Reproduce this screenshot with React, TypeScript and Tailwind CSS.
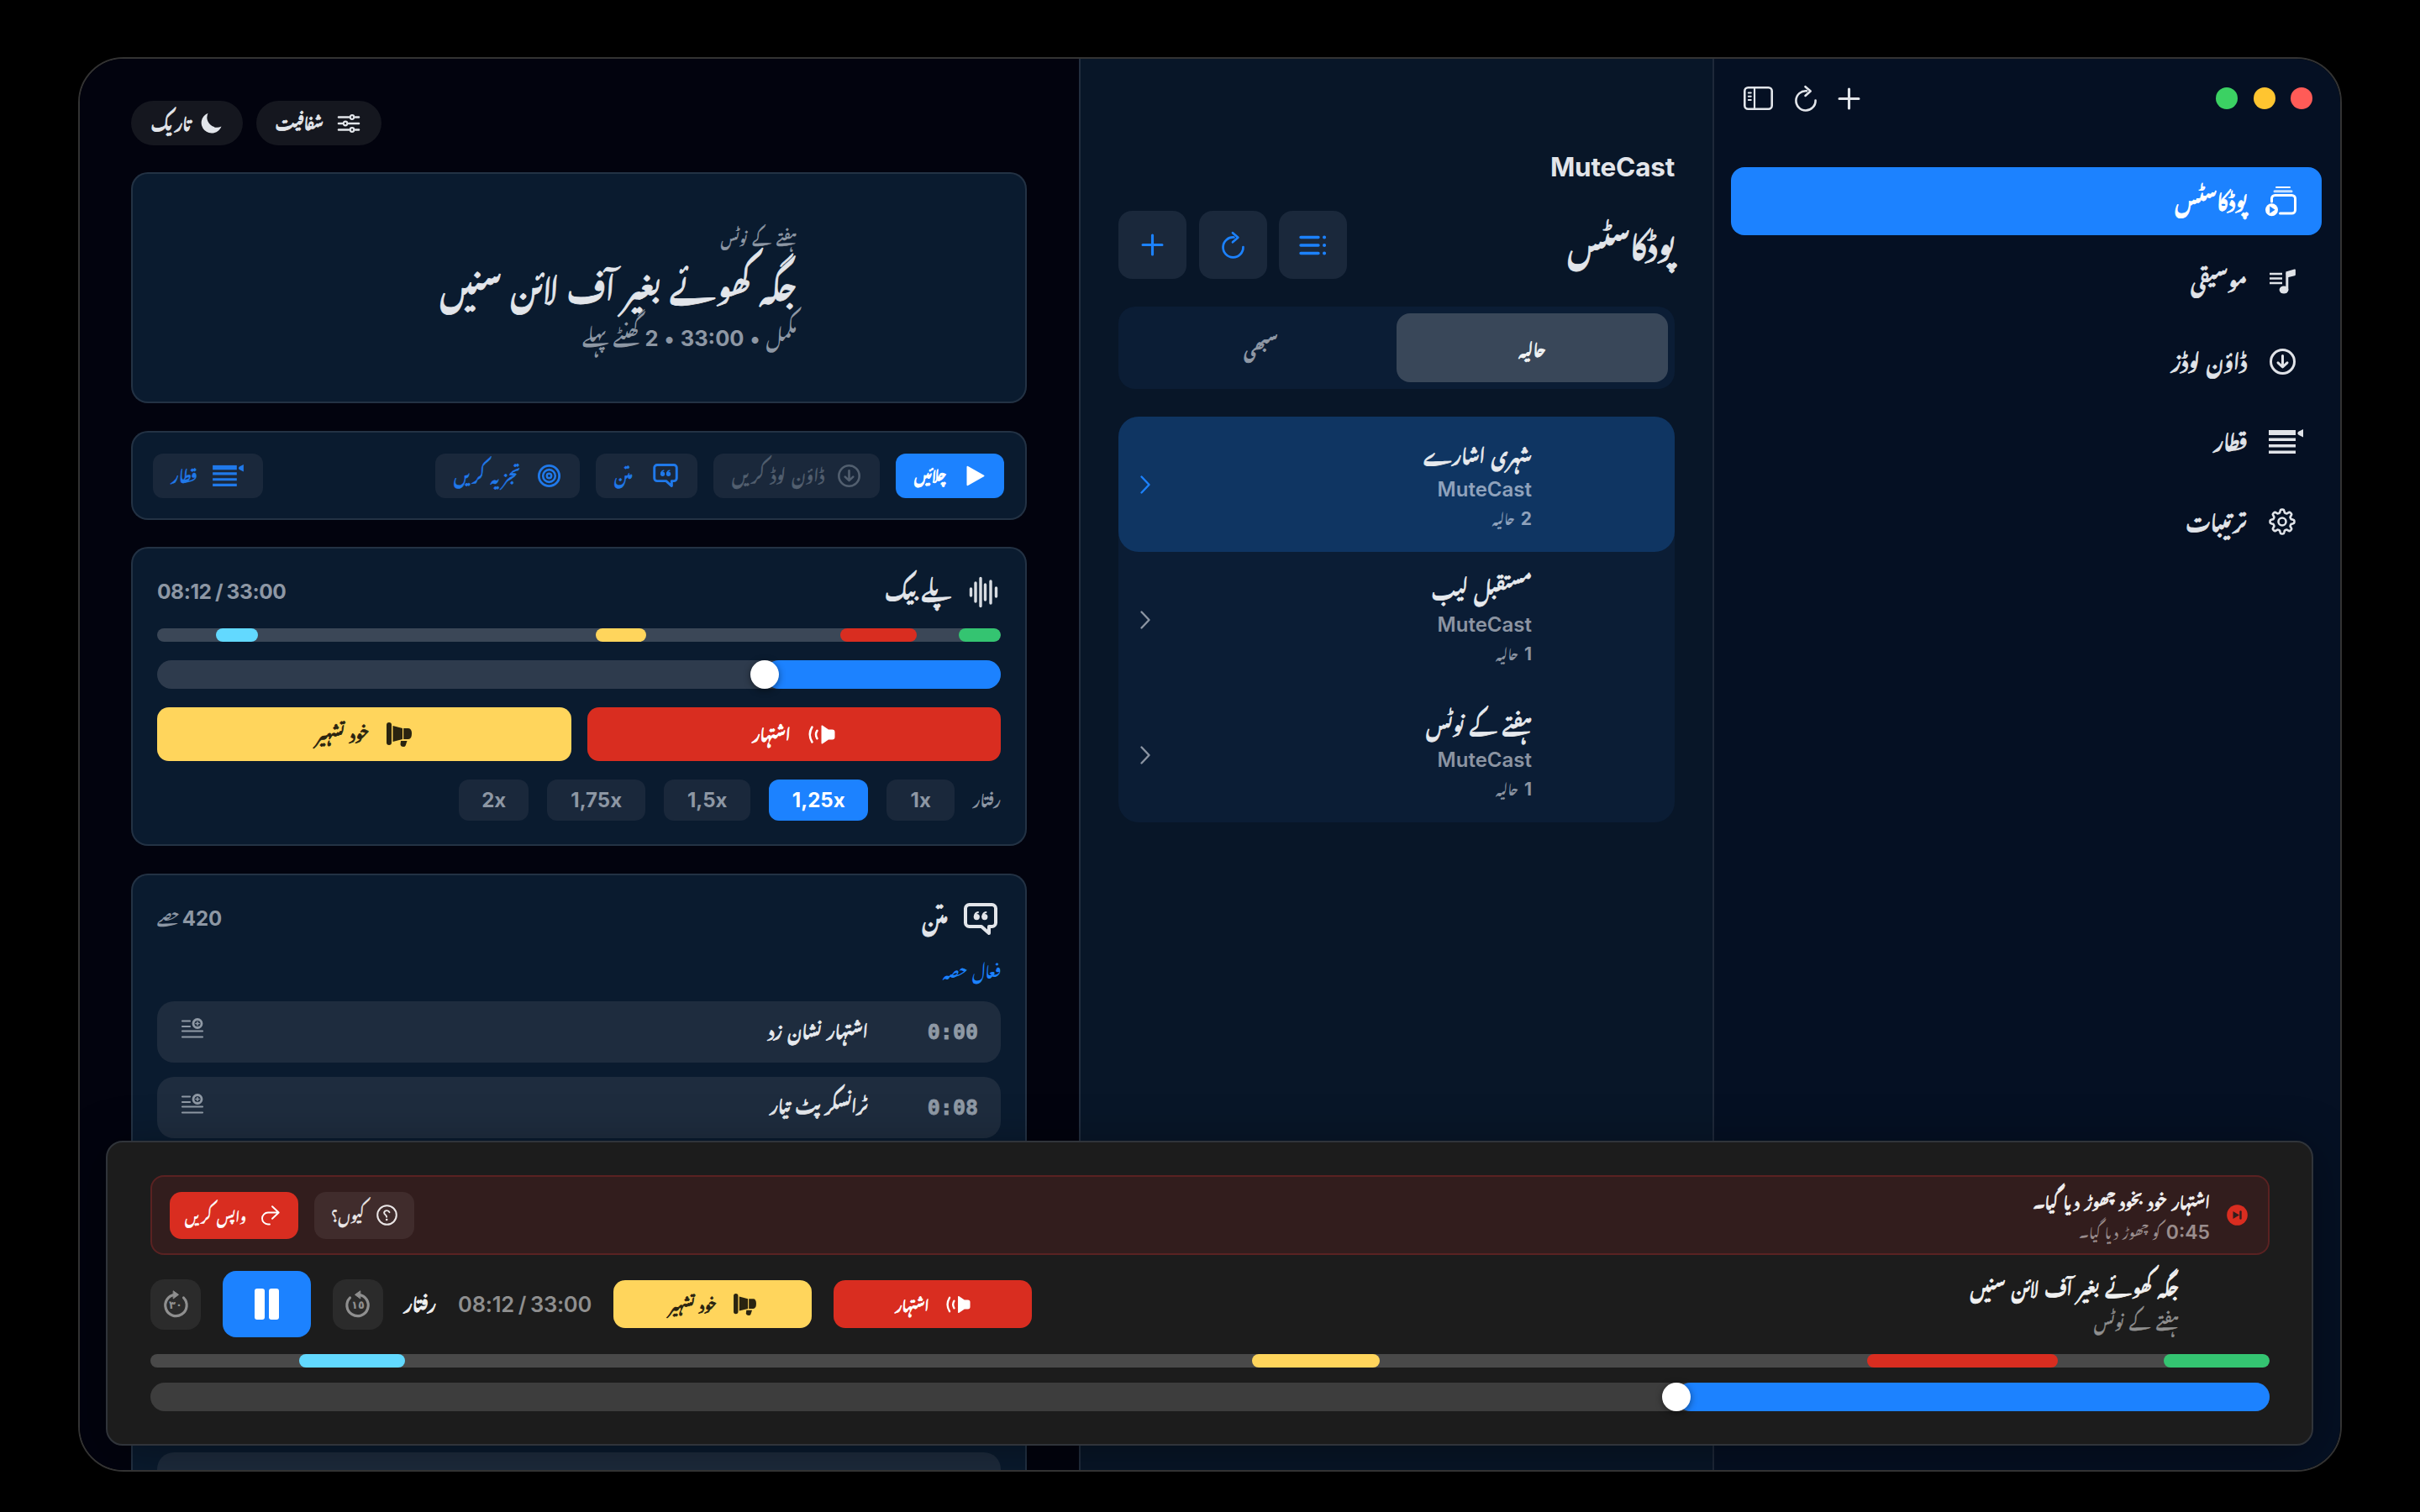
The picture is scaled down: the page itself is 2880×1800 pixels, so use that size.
import type { ReactNode } from "react";
import { clsx } from "clsx";

type IconProps = { className?: string };

function Svg({ box, className, children }: { box: string; className?: string; children: ReactNode }) {
  return (
    <svg
      viewBox={box}
      className={clsx("shrink-0 overflow-visible", className)}
      fill="none"
      stroke="currentColor"
      strokeWidth={2.6}
      strokeLinecap="round"
      strokeLinejoin="round"
    >
      {children}
    </svg>
  );
}

const PlusIcon = ({ className }: IconProps) => (
  <Svg box="0 0 24 24" className={className}>
    <path d="M12 1v22M1 12h22" strokeWidth={3} />
  </Svg>
);

const RefreshIcon = ({ className }: IconProps) => (
  <Svg box="0 0 26 31" className={className}>
    <path d="M14 6.3A11.6 11.6 0 1 0 24.6 17.5" />
    <path d="M12.5 1.2l6.2 5.3-6.2 5.4" />
  </Svg>
);

const SidebarIcon = ({ className }: IconProps) => (
  <Svg box="0 0 35 28" className={className}>
    <rect x="1.3" y="1.3" width="32.4" height="25.4" rx="4" />
    <path d="M13 1.5v25" strokeWidth={2.2} />
    <path d="M5.8 7.5h3M5.8 11.8h3M5.8 16h3" strokeWidth={2} />
  </Svg>
);

const PodcastsIcon = ({ className }: IconProps) => (
  <Svg box="0 0 37 35" className={className}>
    <path d="M13 1h16" strokeWidth={2} />
    <path d="M11 5.8h20" strokeWidth={3} strokeOpacity={0.75} />
    <path d="M7.5 18v-3.5a4 4 0 0 1 4-4h20a4 4 0 0 1 4 4V28a4 4 0 0 1-4 4H17.5" strokeWidth={3} />
    <circle cx="7.5" cy="27.8" r="7.5" fill="currentColor" stroke="none" />
    <path d="M5.2 23.6v8.4l6.4-4.2z" fill="#1c82ff" stroke="none" />
  </Svg>
);

const MusicIcon = ({ className }: IconProps) => (
  <Svg box="0 0 31 30" className={className}>
    <path d="M0 6h15M0 11.5h15M0 17h15" strokeLinecap="butt" />
    <ellipse cx="17" cy="25" rx="5.4" ry="4.5" fill="currentColor" stroke="none" />
    <path d="M20.8 25V5.5" strokeWidth={3} />
    <path d="M19.3 3.5L29.5.6q1.4-.3 1.4 1V7q0 1-1 1.3L20.5 10.5z" fill="currentColor" stroke="none" />
  </Svg>
);

const DownloadIcon = ({ className }: IconProps) => (
  <Svg box="0 0 31 31" className={className}>
    <circle cx="15.5" cy="15.5" r="14" strokeWidth={3} />
    <path d="M15.5 8.5v13M10 16.8l5.5 5.2 5.5-5.2" strokeWidth={3} />
  </Svg>
);

const QueueIcon = ({ className }: IconProps) => (
  <Svg box="0 0 41 29" className={className}>
    <path d="M0 4h32" strokeWidth={6} strokeLinecap="butt" />
    <path d="M0 12.2h32M0 19.8h32M0 27.2h32" strokeWidth={3.6} strokeLinecap="butt" />
    <path d="M41 0v9.5l-5.5-2.7q-2.4-2 0-4z" fill="currentColor" stroke="none" />
  </Svg>
);

function GearIcon({ className }: IconProps) {
  const teeth = 8;
  const points = Array.from({ length: 96 }, (_, i) => {
    const a = (i / 96) * Math.PI * 2;
    const wave = Math.tanh(Math.cos(a * teeth) * 2.2);
    const r = 12.6 + wave * 1.9;
    return `${(16 + Math.sin(a) * r).toFixed(2)},${(16 - Math.cos(a) * r).toFixed(2)}`;
  }).join(" ");
  return (
    <Svg box="0 0 32 32" className={className}>
      <polygon points={points} />
      <circle cx="16" cy="16" r="4.5" />
    </Svg>
  );
}

const ListIcon = ({ className }: IconProps) => (
  <Svg box="0 0 31 24" className={className}>
    <path d="M1 2.5h21M1 12h21M1 21.5h21" strokeWidth={3.4} />
    <path d="M29 2.5h.1M29 12h.1M29 21.5h.1" strokeWidth={4} />
  </Svg>
);

const SlidersIcon = ({ className }: IconProps) => (
  <Svg box="0 0 26 22" className={className}>
    <path d="M1 3.5h12M21 3.5h4M1 11h4M13 11h12M1 18.5h12M21 18.5h4" />
    <circle cx="17" cy="3.5" r="2.3" strokeWidth={2.2} />
    <circle cx="9" cy="11" r="2.3" strokeWidth={2.2} />
    <circle cx="17" cy="18.5" r="2.3" strokeWidth={2.2} />
  </Svg>
);

const MoonIcon = ({ className }: IconProps) => (
  <Svg box="0 0 25 25" className={className}>
    <path d="M8.5.8A12.3 12.3 0 1 0 24.5 16.5 12 12 0 0 1 8.5.8z" fill="currentColor" stroke="none" />
  </Svg>
);

const PlayIcon = ({ className }: IconProps) => (
  <Svg box="0 0 22 25" className={className}>
    <path d="M1.5 1.8v21.4L20.5 12.5z" fill="currentColor" strokeWidth={2} />
  </Svg>
);

const QuoteIcon = ({ className }: IconProps) => (
  <Svg box="0 0 40 38" className={className}>
    <path
      d="M6.5 2h27a4.5 4.5 0 0 1 4.5 4.5v17a4.5 4.5 0 0 1-4.5 4.5H30v8l-9-8H6.5A4.5 4.5 0 0 1 2 23.5v-17A4.5 4.5 0 0 1 6.5 2z"
      strokeWidth={4}
    />
    <circle cx="15.3" cy="16.6" r="3.6" fill="currentColor" stroke="none" />
    <circle cx="24.8" cy="16.6" r="3.6" fill="currentColor" stroke="none" />
    <path d="M13 16q0-4 4-5M22.5 16q0-4 4-5" strokeWidth={2} />
  </Svg>
);

const TargetIcon = ({ className }: IconProps) => (
  <Svg box="0 0 28 28" className={className}>
    <circle cx="14" cy="14" r="12.6" strokeWidth={2.9} />
    <circle cx="14" cy="14" r="7.6" strokeWidth={2.7} />
    <circle cx="14" cy="14" r="2.8" />
  </Svg>
);

const WaveIcon = ({ className }: IconProps) => (
  <Svg box="0 0 34 36" className={className}>
    <path d="M1.5 14v8M7 7v22M13 1.5v33M18.5 9v18M25 5v26M31.5 13v10" strokeWidth={3.4} />
  </Svg>
);

const SpeakerIcon = ({ className }: IconProps) => (
  <Svg box="0 0 32 23" className={className}>
    <path
      d="M15.5 1.2q0-1.2 1.2-.6L24 5.5h4.5q3 0 3 3v6q0 3-3 3H24l-7.3 4.9q-1.2.6-1.2-.6z"
      fill="currentColor"
      stroke="none"
    />
    <path d="M10.5 6.8q-3 4.7 0 9.4M4.5 2.5q-5.5 9 0 18" />
  </Svg>
);

const MegaphoneIcon = ({ className }: IconProps) => (
  <Svg box="0 0 30 29" className={className}>
    <g fill="currentColor" stroke="none">
      <rect x="0" y="0" width="6" height="27" rx="3" />
      <path d="M7.5 4L19 7v13L7.5 23z" />
      <path d="M20.2 7H26q4 0 4 6.5T26 20h-5.8z" />
      <path d="M17 22h7.5l-1.8 5.5q-.7 1.5-2.5 1.5-3.5 0-3.7-3z" />
    </g>
  </Svg>
);

const MarkIcon = ({ className }: IconProps) => (
  <Svg box="0 0 26 23" className={className}>
    <path d="M1 2.5h9M1 9h9M1 14.5h24M1 21.5h24" strokeWidth={2.2} />
    <circle cx="19" cy="5.5" r="5" strokeWidth={2.8} />
    <path d="M17 5.5h4M19 3.5v4" strokeWidth={1.5} />
  </Svg>
);

const ChevronIcon = ({ className }: IconProps) => (
  <Svg box="0 0 12 22" className={className}>
    <path d="M1.5 1.5L10.5 11l-9 9.5" strokeWidth={2.4} />
  </Svg>
);

const SkipIcon = ({ className }: IconProps) => (
  <Svg box="0 0 25 25" className={className}>
    <circle cx="12.5" cy="12.5" r="12.3" fill="currentColor" stroke="none" />
    <path d="M7.5 8v9l7.5-4.5z" fill="#331d1d" stroke="none" />
    <path d="M16.5 8.5v8" stroke="#331d1d" strokeWidth={2.4} />
  </Svg>
);

const QuestionIcon = ({ className }: IconProps) => (
  <Svg box="0 0 25 25" className={className}>
    <circle cx="12.5" cy="12.5" r="11.3" strokeWidth={2} />
    <path d="M15.5 9.2a3.4 3.4 0 0 0-6.4.3c0 2.6 3 2.6 3 5.2" strokeWidth={1.9} />
    <circle cx="12.2" cy="18" r="1.3" fill="currentColor" stroke="none" />
  </Svg>
);

const UndoIcon = ({ className }: IconProps) => (
  <Svg box="0 0 24 24" className={className}>
    <path d="M12 22.5H10a7 7 0 0 1 0-14h12.5M15 1.2l7.7 7.3L15 15.8" strokeWidth={1.9} />
  </Svg>
);

function SeekIcon({ label, back }: { label: string; back?: boolean }) {
  return (
    <div className="relative flex h-[31px] w-[30px] items-center justify-center">
      <Svg box="0 0 30 31" className={clsx("absolute inset-0 h-[31px] w-[30px]", back && "-scale-x-100")}>
        <path d="M14 4.3A12.7 12.7 0 1 0 24.5 8" strokeWidth={3.2} />
        <path d="M12.5 0l6 4.3-6 4.5z" fill="currentColor" strokeWidth={1} />
      </Svg>
      <span className="pt-[2px] font-['DejaVu_Sans'] text-[13px] font-bold leading-none">{label}</span>
    </div>
  );
}

/* ---------- bars ---------- */

const SEGMENTS = [
  { start: 0, width: 5, color: "bg-[#34c471]" },
  { start: 10, width: 9, color: "bg-[#d92d20]" },
  { start: 42, width: 6, color: "bg-[#ffd55c]" },
  { start: 88, width: 5, color: "bg-[#62d9ff]" },
];

function SegmentBar({ className }: { className: string }) {
  return (
    <div className={clsx("relative h-4 overflow-hidden rounded-full", className)}>
      {SEGMENTS.map((s) => (
        <div
          key={s.start}
          className={clsx("absolute inset-y-0 rounded-full", s.color)}
          style={{ right: `${s.start}%`, width: `${s.width}%` }}
        />
      ))}
    </div>
  );
}

function Slider({ value, className }: { value: number; className: string }) {
  return (
    <div className={clsx("relative h-[34px] rounded-full", className)}>
      <div className="absolute inset-y-0 right-0 rounded-full bg-[#1c82ff]" style={{ width: `${value}%` }} />
      <div
        className="absolute top-0 size-[34px] translate-x-1/2 rounded-full bg-white shadow-[0_2px_8px_rgba(0,0,0,0.45)]"
        style={{ right: `${value}%` }}
      />
    </div>
  );
}

/* ---------- sidebar ---------- */

// nastaliq runs a little light at small sizes, so bold labels get a hairline stroke
const BOLD = "font-bold [-webkit-text-stroke:0.8px_currentColor]";
const MEDIUM = "font-semibold [-webkit-text-stroke:0.4px_currentColor]";

const NAV = [
  { label: "پوڈکاسٹس", icon: <PodcastsIcon className="mr-[3px] h-[35px] w-[37px]" />, active: true },
  { label: "موسیقی", icon: <MusicIcon className="h-[30px] w-[31px]" /> },
  { label: "ڈاؤن لوڈز", icon: <DownloadIcon className="size-[31px]" /> },
  { label: "قطار", icon: <QueueIcon className="-mr-2 h-[29px] w-[41px]" /> },
  { label: "ترتیبات", icon: <GearIcon className="size-8" /> },
];

function Sidebar() {
  return (
    <aside className="w-[747px] shrink-0 border-l-2 border-white/10 bg-[#051023]">
      <div className="flex h-[94px] items-center justify-between pr-[33px] pl-[35px]">
        <div className="flex gap-[18.5px]">
          <span className="size-[26px] rounded-full bg-[#ff5b57]" />
          <span className="size-[26px] rounded-full bg-[#ffc530]" />
          <span className="size-[26px] rounded-full bg-[#3bd163]" />
        </div>
        <div className="flex items-center gap-[26px] text-[#e2e5ea]">
          <PlusIcon className="size-[25px]" />
          <RefreshIcon className="h-[31px] w-[26px]" />
          <SidebarIcon className="h-7 w-[35px]" />
        </div>
      </div>
      <nav className="flex flex-col gap-[15px] pt-[35px] pr-[22px] pl-5">
        {NAV.map((item) => (
          <div
            key={item.label}
            className={clsx(
              "flex h-[80.5px] items-center gap-[24px] rounded-2xl pr-[29px] text-[23.5px]",
              BOLD,
              item.active ? "bg-[#1c82ff] text-white" : "text-[#e0e3e8]"
            )}
          >
            <div className="flex w-9 justify-center">{item.icon}</div>
            <span className="pt-[6px] leading-none">{item.label}</span>
          </div>
        ))}
      </nav>
    </aside>
  );
}

/* ---------- podcast list ---------- */

const SHOWS = [
  { title: "شہری اشارے", recent: 2, active: true },
  { title: "مستقبل لیب", recent: 1 },
  { title: "ہفتے کے نوٹس", recent: 1 },
];

function Library() {
  return (
    <section className="w-[754px] shrink-0 border-l-2 border-white/10 bg-[#081628] pt-[108px] pr-[45px] pl-[45px]">
      <h1 className="text-[31.5px] font-bold leading-[42px] tracking-[-0.2px] text-[#e2e5ea]">MuteCast</h1>
      <div className="mt-[31px] flex h-[81px] items-center justify-between">
        <h2 className={clsx("pt-[12px] text-[35px] leading-none text-[#e2e5ea]", BOLD)}>پوڈکاسٹس</h2>
        <div className="flex gap-[14.5px] text-[#1c82ff]">
          <div className="flex size-[81px] items-center justify-center rounded-2xl bg-[#1a283b]">
            <ListIcon className="h-6 w-[31px]" />
          </div>
          <div className="flex size-[81px] items-center justify-center rounded-2xl bg-[#1a283b]">
            <RefreshIcon className="h-[32px] w-[27px]" />
          </div>
          <div className="flex size-[81px] items-center justify-center rounded-2xl bg-[#1a283b]">
            <PlusIcon className="size-[25px]" />
          </div>
        </div>
      </div>

      <div className={clsx("mt-[33px] flex h-[98px] rounded-[20px] bg-[#0b1d35] p-2 text-[18.5px]", BOLD)}>
        <div className="flex flex-1 items-center justify-center rounded-2xl bg-[#394759] pt-[9px] text-[#f0f2f4]">حالیہ</div>
        <div className="flex flex-1 items-center justify-center pt-[9px] text-[#8f98a5]">سبھی</div>
      </div>

      <div className="mt-[33px] rounded-[24px] bg-[#0b1d35]">
        {SHOWS.map((show) => (
          <div
            key={show.title}
            className={clsx(
              "flex h-[161px] items-center justify-between rounded-[24px] pr-[170px] pl-[26px]",
              show.active && "bg-[#0f3562]"
            )}
          >
            <div className="flex flex-col pt-[9px]">
              <span className={clsx("text-[22px] leading-[44px] text-[#e6e9ed]", BOLD)}>{show.title}</span>
              <span className={clsx("text-[24px] font-semibold leading-[32px]", show.active ? "text-[#8fa2bc]" : "text-[#8b94a2]")}>
                MuteCast
              </span>
              <span className={clsx("text-[21px] font-bold leading-[38px]", show.active ? "text-[#8fa2bc]" : "text-[#8b94a2]")}>
                {show.recent} <span className="text-[15.5px]">حالیہ</span>
              </span>
            </div>
            <ChevronIcon className={clsx("h-[22px] w-3", show.active ? "text-[#1c82ff]" : "text-[#8b94a2]")} />
          </div>
        ))}
      </div>
    </section>
  );
}

/* ---------- episode detail ---------- */

const CARD = "rounded-[20px] border-2 border-white/10 bg-[#0a1b2f]";

const SPEEDS = [
  { label: "1x", width: "w-[81px]" },
  { label: "1,25x", width: "w-[118px]", active: true },
  { label: "1,5x", width: "w-[103px]" },
  { label: "1,75x", width: "w-[117px]" },
  { label: "2x", width: "w-[83px]" },
];

const LINES = [
  { id: 1, time: "0:00", text: "اشتہار نشان زد" },
  { id: 2, time: "0:08", text: "ٹرانسکرپٹ تیار" },
  { id: 3 },
  { id: 4 },
  { id: 5 },
  { id: 6 },
  { id: 7 },
];

function ActionButton({ icon, label, className }: { icon: ReactNode; label: string; className: string }) {
  return (
    <div className={clsx("flex h-[53px] items-center justify-between rounded-xl pr-[23px] pl-[22px]", className)}>
      {icon}
      <span className="pt-[5px] leading-none">{label}</span>
    </div>
  );
}

function Detail() {
  return (
    <main className="flex-1 overflow-hidden bg-[#02030e] pt-[50px] pr-[62px] pl-[61px]">
      <div className={clsx("flex justify-end gap-4 text-[18.5px] text-[#e2e5ea]", BOLD)}>
        <div className="flex h-[53px] w-[149px] items-center justify-between rounded-full bg-[#15171f] pr-[26px] pl-[23px]">
          <SlidersIcon className="h-[22px] w-[26px]" />
          <span className="pt-[5px] text-[17.5px] leading-none">شفافیت</span>
        </div>
        <div className="flex h-[53px] w-[133px] items-center justify-between rounded-full bg-[#15171f] pr-[25px] pl-[24px]">
          <MoonIcon className="size-[25px]" />
          <span className="pt-[5px] leading-none">تاریک</span>
        </div>
      </div>

      <div className={clsx(CARD, "mt-8 flex h-[275px] flex-col justify-center pt-[7px] pr-[272px]")}>
        <span className={clsx("text-[16px] leading-[34px] text-[#8d97a4]", MEDIUM)}>ہفتے کے نوٹس</span>
        <span className={clsx("pt-[8px] text-[36.5px] leading-[74px] text-[#e2e5ea]", BOLD)}>جگہ کھوئے بغیر آف لائن سنیں</span>
        <span className="text-[25.5px] font-bold leading-[36px] text-[#8d97a4] [word-spacing:1px]">
          <span className="text-[21px]">مکمل</span> • 33:00 • 2 <span className="text-[21px]">گھنٹے پہلے</span>
        </span>
      </div>

      <div className={clsx(CARD, "mt-[33px] flex h-[106px] items-center gap-[19px] pr-[25px] pl-[24px]")}>
        <ActionButton
          className={clsx("w-[129px] bg-[#1c82ff] text-[16.5px] text-white", BOLD)}
          icon={<PlayIcon className="h-[25px] w-[22px]" />}
          label="چلائیں"
        />
        <ActionButton
          className={clsx("w-[198px] bg-[#1a283b] text-[19.5px] text-[#525f6f]", MEDIUM)}
          icon={<DownloadIcon className="size-[27px]" />}
          label="ڈاؤن لوڈ کریں"
        />
        <ActionButton
          className={clsx("w-[121px] bg-[#1a283b] text-[18px] text-[#2079ea]", MEDIUM)}
          icon={<QuoteIcon className="h-7 w-[30px]" />}
          label="متن"
        />
        <ActionButton
          className={clsx("w-[172px] bg-[#1a283b] text-[18.5px] text-[#2079ea]", MEDIUM)}
          icon={<TargetIcon className="size-[27px]" />}
          label="تجزیہ کریں"
        />
        <ActionButton
          className={clsx("mr-auto w-[131px] bg-[#1a283b] text-[19px] text-[#2079ea]", MEDIUM)}
          icon={<QueueIcon className="h-[26px] w-[37px]" />}
          label="قطار"
        />
      </div>

      <div className={clsx(CARD, "mt-8 h-[356px] px-[29px]")}>
        <div className="flex h-[95px] items-center pt-[8px]">
          <WaveIcon className="ml-[16px] mr-[3px] h-9 w-[34px] text-[#d8dce2]" />
          <span className={clsx("pt-[5px] text-[23.5px] leading-none text-[#e2e5ea]", BOLD)}>پلے بیک</span>
          <span className="mr-auto text-[24.5px] font-bold leading-none tracking-[-0.4px] text-[#8d97a4] [word-spacing:-1px]" dir="ltr">
            08:12 / 33:00
          </span>
        </div>
        <SegmentBar className="bg-[#3b4757]" />
        <Slider value={28} className="mt-[22px] bg-[#2e3b4d]" />
        <div className={clsx("mt-[22px] flex gap-[19px] text-[18px]", BOLD)}>
          <div className="flex h-16 flex-1 items-center justify-center gap-[21px] rounded-[14px] bg-[#d92d20] text-white">
            <SpeakerIcon className="h-[23px] w-8" />
            <span className="pt-[6px] leading-none">اشتہار</span>
          </div>
          <div className="flex h-16 flex-1 items-center justify-center gap-[21px] rounded-[14px] bg-[#ffd55c] text-[#2a2410]">
            <MegaphoneIcon className="h-[29px] w-[30px]" />
            <span className="pt-[6px] leading-none">خود تشہیر</span>
          </div>
        </div>
        <div className="mt-[22px] flex items-center gap-[22px]">
          <span className={clsx("pt-[4px] text-[18px] leading-none text-[#8d97a4]", MEDIUM)}>رفتار</span>
          {SPEEDS.map((s) => (
            <span
              key={s.label}
              dir="ltr"
              className={clsx(
                "flex h-[49px] items-center justify-center rounded-xl pt-px text-[24px] font-bold",
                s.width,
                s.active ? "bg-[#1c82ff] text-white" : "bg-[#1a283b] text-[#8d97a4]"
              )}
            >
              {s.label}
            </span>
          ))}
        </div>
      </div>

      <div className={clsx(CARD, "mt-[33px] h-[1000px] px-[29px]")}>
        <div className="flex h-[104px] items-center">
          <QuoteIcon className="ml-[19px] mr-[4px] h-[38px] w-10 text-[#e2e5ea]" />
          <span className={clsx("pt-[6px] text-[24.5px] leading-none text-[#e2e5ea]", BOLD)}>متن</span>
          <span className="mr-auto text-[24px] font-bold leading-none text-[#8d97a4] [word-spacing:-2px]">
            420 <span className="text-[16.5px]">حصے</span>
          </span>
        </div>
        <div className="h-[46px] pt-px text-[17.5px] font-bold leading-[24px] text-[#1c82ff]">فعال حصہ</div>
        <div className="flex flex-col gap-[16.5px]">
          {LINES.map((line) => (
            <div key={line.id} className="flex h-[73px] items-center rounded-[20px] bg-[#1e2c3e] pr-[27px] pl-[29px]">
              {line.text && (
                <>
                  <span className="w-[131px] font-['DejaVu_Sans_Mono'] text-[25px] font-bold leading-none text-[#8f99a5] [-webkit-text-stroke:0.8px_currentColor]">
                    <bdi dir="ltr">{line.time}</bdi>
                  </span>
                  <span className={clsx("pt-[4px] text-[19.5px] leading-none text-[#e6e9ed]", BOLD)}>{line.text}</span>
                  <MarkIcon className="mr-auto mb-[8px] h-[23px] w-[26px] text-[#8f99a5]" />
                </>
              )}
            </div>
          ))}
        </div>
      </div>
    </main>
  );
}

/* ---------- floating player ---------- */

function Player() {
  return (
    <div className="absolute top-[1288px] right-8 left-[31px] h-[363px] rounded-[20px] border-2 border-[#30343a] bg-[#1c1c1c] pt-[39px] pr-[50px] pl-[51px] shadow-[0_10px_60px_rgba(0,0,0,0.35)]">
      <div className="flex h-[95px] items-center rounded-2xl border-2 border-[#5a2222] bg-[#321d1d] pr-[24px] pl-[21px]">
        <SkipIcon className="size-[25px] text-[#d92d20]" />
        <div className="mr-[20px] flex flex-col pt-[6px]">
          <span className={clsx("text-[18px] leading-[36px] text-[#f0eeee]", BOLD)}>اشتہار خود بخود چھوڑ دیا گیا۔</span>
          <span className="text-[23px] font-semibold leading-[30px] text-[#9a8d8d] [word-spacing:1px]">
            0:45 <span className="text-[16px]">کو چھوڑ دیا گیا۔</span>
          </span>
        </div>
        <div className={clsx("mr-auto flex h-14 w-[119px] items-center justify-between rounded-[14px] bg-[#402c2c] px-5 text-[17px] text-[#ebe7e7]", MEDIUM)}>
          <QuestionIcon className="size-[25px]" />
          <span className="pt-[6px] leading-none">کیوں؟</span>
        </div>
        <div className={clsx("mr-[19px] flex h-14 w-[153px] items-center justify-between rounded-[14px] bg-[#d92d20] pr-[22px] pl-[18px] text-[16px] text-white", MEDIUM)}>
          <UndoIcon className="size-6" />
          <span className="pt-[6px] leading-none">واپس کریں</span>
        </div>
      </div>

      <div className="mt-[19px] flex h-[79px] items-center gap-[26px]">
        <div className="mr-[108px] ml-auto flex flex-col pt-[9px]">
          <span className={clsx("text-[21px] leading-[40px] text-[#f0f0f0]", BOLD)}>جگہ کھوئے بغیر آف لائن سنیں</span>
          <span className={clsx("text-[18px] leading-[40px] text-[#8f8f8f]", MEDIUM)}>ہفتے کے نوٹس</span>
        </div>
        <div className={clsx("flex h-[57px] w-[236px] items-center justify-center gap-[20px] rounded-[14px] bg-[#d92d20] text-[16px] text-white", BOLD)}>
          <SpeakerIcon className="h-[22px] w-[29px]" />
          <span className="pt-[6px] leading-none">اشتہار</span>
        </div>
        <div className={clsx("flex h-[57px] w-[236px] items-center justify-center gap-[20px] rounded-[14px] bg-[#ffd55c] text-[16px] text-[#2a2410]", BOLD)}>
          <MegaphoneIcon className="h-[26px] w-[27px]" />
          <span className="pt-[6px] leading-none">خود تشہیر</span>
        </div>
        <span className="text-[25.5px] font-semibold leading-none tracking-[-0.2px] text-[#8f8f8f] [word-spacing:-1.5px]" dir="ltr">
          08:12 / 33:00
        </span>
        <span className={clsx("pt-[4px] text-[20px] leading-none text-[#f0f0f0]", BOLD)}>رفتار</span>
        <div className="-mr-px flex size-[60px] items-center justify-center rounded-2xl bg-[#2b2b2b] text-[#8f8f8f]">
          <SeekIcon label="١٥" back />
        </div>
        <div className="flex h-[79px] w-[105px] items-center justify-center gap-[5px] rounded-2xl bg-[#1c82ff]">
          <span className="h-[37px] w-3 rounded-[3px] bg-white" />
          <span className="h-[37px] w-3 rounded-[3px] bg-white" />
        </div>
        <div className="flex size-[60px] items-center justify-center rounded-2xl bg-[#2b2b2b] text-[#8f8f8f]">
          <SeekIcon label="٣٠" />
        </div>
      </div>

      <SegmentBar className="mt-5 bg-[#494949]" />
      <Slider value={28} className="mt-[18px] bg-[#3d3d3d]" />
    </div>
  );
}

export default function App() {
  return (
    <div
      dir="rtl"
      lang="ur"
      className="h-[1800px] w-[2880px] overflow-hidden bg-black pt-[68px] pr-[93px] font-[Inter,'Noto_Nastaliq_Urdu',sans-serif] whitespace-nowrap [word-spacing:2px]"
    >
      <div className="relative flex h-[1684px] w-[2694px] overflow-hidden rounded-[54px] border-2 border-white/20">
        <Sidebar />
        <Library />
        <Detail />
        <Player />
      </div>
    </div>
  );
}
